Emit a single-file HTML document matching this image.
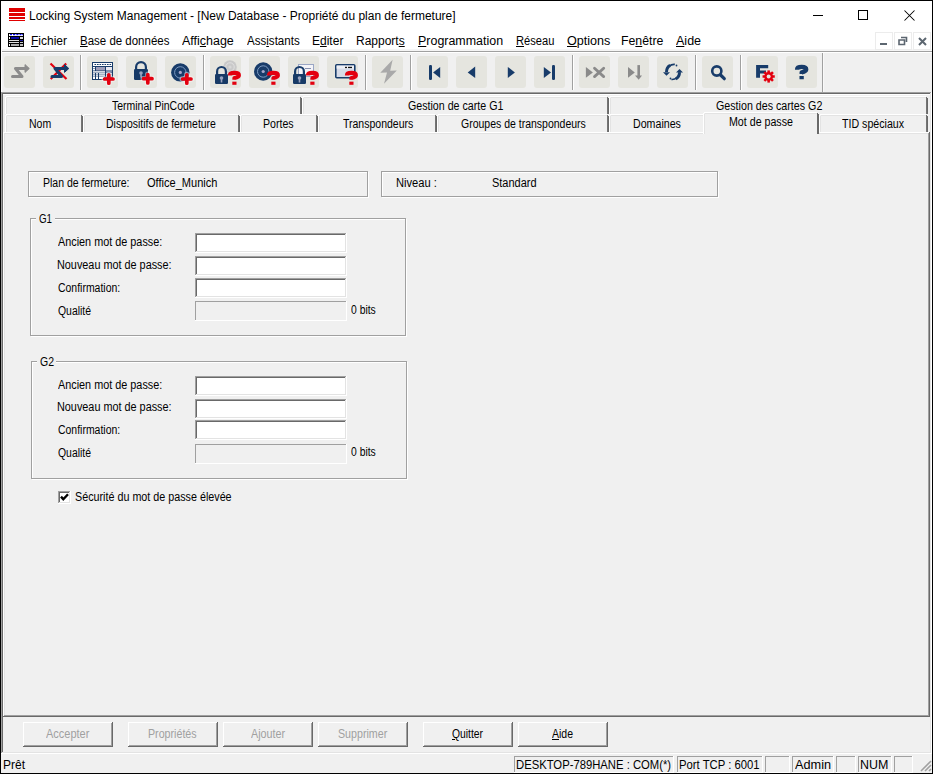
<!DOCTYPE html>
<html><head><meta charset="utf-8"><style>
html,body{margin:0;padding:0;}
body{width:933px;height:774px;position:relative;overflow:hidden;background:#f0f0f0;font-family:"Liberation Sans",sans-serif;}
body>div,body>span,body>svg{position:absolute;box-sizing:content-box;}
.t{white-space:pre;transform-origin:0 0;}
u{text-decoration:underline;text-underline-offset:1px;}
</style></head><body>
<div style="left:1px;top:1px;width:931px;height:50px;background:#ffffff;"></div>
<div style="left:0px;top:0px;width:933px;height:1px;background:#000;"></div>
<div style="left:0px;top:773px;width:933px;height:1px;background:#000;"></div>
<div style="left:0px;top:0px;width:1px;height:774px;background:#000;"></div>
<div style="left:932px;top:0px;width:1px;height:774px;background:#000;"></div>
<div style="left:9px;top:8px;width:16px;height:4px;background:#e00000;"></div>
<div style="left:9px;top:13px;width:16px;height:3px;background:#e00000;"></div>
<div style="left:9px;top:17px;width:16px;height:2px;background:#e00000;"></div>
<div style="left:9px;top:20px;width:16px;height:1px;background:#e00000;"></div>
<div style="left:813px;top:15px;width:10px;height:1px;background:#000;"></div>
<div style="left:858px;top:10px;width:8px;height:8px;border:1px solid #000"></div>
<svg style="left:904px;top:10px" width="11" height="11" viewBox="0 0 11 11"><path d="M0.5 0.5L10.5 10.5M10.5 0.5L0.5 10.5" stroke="#000" stroke-width="1.05"/></svg>
<div style="left:2px;top:49px;width:930px;height:2px;background:#f5f5f5;"></div>
<div style="left:2px;top:51px;width:930px;height:1px;background:#a0a0a0;"></div>
<div style="left:1px;top:52px;width:931px;height:1px;background:#ffffff;"></div>
<div style="left:1px;top:49px;width:1px;height:43px;background:#ffffff;"></div>
<svg style="left:8px;top:33px" width="16" height="14" viewBox="0 0 16 14">
<rect x="0" y="0" width="16" height="14" fill="#000"/>
<rect x="1" y="1" width="14" height="2" fill="#fff"/>
<rect x="2" y="1" width="2" height="1.2" fill="#0a0af0"/><rect x="5" y="1" width="2.3" height="1.2" fill="#0a0af0"/><rect x="8.3" y="1" width="2.2" height="1.2" fill="#0a0af0"/><rect x="11.5" y="1" width="2" height="1.2" fill="#0a0af0"/><rect x="14" y="1" width="0.8" height="1.2" fill="#0a0af0"/>
<rect x="3" y="4" width="8" height="2" fill="#0808a8"/><rect x="1" y="4" width="1" height="2" fill="#fff"/><rect x="12" y="4" width="3" height="2" fill="#ddd"/>
<rect x="1" y="7" width="10" height="1" fill="#ddd"/><rect x="12" y="7" width="3" height="1" fill="#2020a0"/>
<rect x="1" y="9" width="10" height="1" fill="#ddd"/><rect x="12" y="9" width="3" height="1" fill="#ccc"/>
<rect x="1" y="11" width="1" height="2" fill="#fff"/><rect x="3" y="11" width="8" height="2" fill="#aaa"/><rect x="12" y="11" width="3" height="2" fill="#bbb"/>
</svg>
<div style="left:875px;top:32px;width:16px;height:16px;border:1px solid #ececec"></div>
<div style="left:894px;top:32px;width:16px;height:16px;border:1px solid #ececec"></div>
<div style="left:913px;top:32px;width:16px;height:16px;border:1px solid #ececec"></div>
<div style="left:880px;top:43px;width:7px;height:2px;background:#5c6670;"></div>
<svg style="left:898px;top:36px" width="10" height="10" viewBox="0 0 10 10"><path d="M3 1.5H8.5V6M1 4H6.5V8.5H1Z" fill="none" stroke="#5c6670" stroke-width="1.6"/></svg>
<svg style="left:917px;top:36px" width="11" height="11" viewBox="0 0 11 11"><path d="M2 2L9 9M9 2L2 9" stroke="#5c6670" stroke-width="2"/></svg>
<div style="left:4px;top:56px;width:31px;height:32px;background:#e5e5df;border-radius:3px"></div>
<div style="left:43px;top:56px;width:31px;height:32px;background:#e5e5df;border-radius:3px"></div>
<div style="left:87px;top:56px;width:31px;height:32px;background:#e5e5df;border-radius:3px"></div>
<div style="left:126px;top:56px;width:31px;height:32px;background:#e5e5df;border-radius:3px"></div>
<div style="left:165px;top:56px;width:31px;height:32px;background:#e5e5df;border-radius:3px"></div>
<div style="left:210px;top:56px;width:31px;height:32px;background:#e5e5df;border-radius:3px"></div>
<div style="left:249px;top:56px;width:31px;height:32px;background:#e5e5df;border-radius:3px"></div>
<div style="left:288px;top:56px;width:31px;height:32px;background:#e5e5df;border-radius:3px"></div>
<div style="left:327px;top:56px;width:31px;height:32px;background:#e5e5df;border-radius:3px"></div>
<div style="left:372px;top:56px;width:31px;height:32px;background:#e5e5df;border-radius:3px"></div>
<div style="left:417px;top:56px;width:31px;height:32px;background:#e5e5df;border-radius:3px"></div>
<div style="left:456px;top:56px;width:31px;height:32px;background:#e5e5df;border-radius:3px"></div>
<div style="left:495px;top:56px;width:31px;height:32px;background:#e5e5df;border-radius:3px"></div>
<div style="left:534px;top:56px;width:31px;height:32px;background:#e5e5df;border-radius:3px"></div>
<div style="left:579px;top:56px;width:31px;height:32px;background:#e5e5df;border-radius:3px"></div>
<div style="left:618px;top:56px;width:31px;height:32px;background:#e5e5df;border-radius:3px"></div>
<div style="left:657px;top:56px;width:31px;height:32px;background:#e5e5df;border-radius:3px"></div>
<div style="left:702px;top:56px;width:31px;height:32px;background:#e5e5df;border-radius:3px"></div>
<div style="left:747px;top:56px;width:31px;height:32px;background:#e5e5df;border-radius:3px"></div>
<div style="left:786px;top:56px;width:31px;height:32px;background:#e5e5df;border-radius:3px"></div>
<div style="left:80px;top:55px;width:1px;height:35px;background:#a0a0a0;"></div>
<div style="left:81px;top:55px;width:1px;height:35px;background:#ffffff;"></div>
<div style="left:203px;top:55px;width:1px;height:35px;background:#a0a0a0;"></div>
<div style="left:204px;top:55px;width:1px;height:35px;background:#ffffff;"></div>
<div style="left:365px;top:55px;width:1px;height:35px;background:#a0a0a0;"></div>
<div style="left:366px;top:55px;width:1px;height:35px;background:#ffffff;"></div>
<div style="left:410px;top:55px;width:1px;height:35px;background:#a0a0a0;"></div>
<div style="left:411px;top:55px;width:1px;height:35px;background:#ffffff;"></div>
<div style="left:572px;top:55px;width:1px;height:35px;background:#a0a0a0;"></div>
<div style="left:573px;top:55px;width:1px;height:35px;background:#ffffff;"></div>
<div style="left:695px;top:55px;width:1px;height:35px;background:#a0a0a0;"></div>
<div style="left:696px;top:55px;width:1px;height:35px;background:#ffffff;"></div>
<div style="left:740px;top:55px;width:1px;height:35px;background:#a0a0a0;"></div>
<div style="left:741px;top:55px;width:1px;height:35px;background:#ffffff;"></div>
<div style="left:822px;top:53px;width:1px;height:39px;background:#a0a0a0;"></div>
<div style="left:823px;top:53px;width:1px;height:39px;background:#f9f9f9;"></div>
<svg style="left:4px;top:56px" width="32" height="32" viewBox="0 0 32 32"><path d="M8.5 20.5H18L11.5 12.5H21.5" fill="none" stroke="#8c8c8c" stroke-width="3" stroke-linecap="round" stroke-linejoin="round"/><path d="M21 8.6L25.3 12.5L21 16.4Z" fill="#8c8c8c" stroke="#8c8c8c" stroke-width="1" stroke-linejoin="round"/></svg><svg style="left:43px;top:56px" width="32" height="32" viewBox="0 0 32 32"><path d="M7.5 7.5L23.5 23M23.2 7.5L7.7 23" stroke="#e3000f" stroke-width="2.2"/><path d="M9.0 20.5H18.5L12.0 12.5H22.0" fill="none" stroke="#183c6a" stroke-width="3" stroke-linecap="round" stroke-linejoin="round"/><path d="M21.5 8.6L25.8 12.5L21.5 16.4Z" fill="#183c6a" stroke="#183c6a" stroke-width="1" stroke-linejoin="round"/></svg><svg style="left:87px;top:56px" width="32" height="32" viewBox="0 0 32 32"><rect x="5" y="6" width="21" height="18" fill="#183c6a"/><rect x="6" y="7" width="19" height="3" fill="#fff"/><rect x="7.5" y="8" width="1.6" height="1" fill="#183c6a"/><rect x="10" y="8" width="1.6" height="1" fill="#183c6a"/><rect x="12.5" y="8" width="1.6" height="1" fill="#183c6a"/><rect x="15" y="8" width="1.6" height="1" fill="#183c6a"/><rect x="17.5" y="8" width="1.6" height="1" fill="#183c6a"/><rect x="20" y="8" width="1.6" height="1" fill="#183c6a"/><rect x="22.5" y="8" width="1.6" height="1" fill="#183c6a"/><rect x="6" y="11" width="2" height="1.5" fill="#fff"/><rect x="6" y="13" width="2" height="1.5" fill="#fff"/><rect x="9" y="11" width="9" height="3.5" fill="#9d9db8"/><rect x="19" y="11" width="6" height="3.5" fill="#e8e8f0"/><rect x="6" y="15.2" width="12" height="1.4" fill="#fff"/><rect x="19" y="15.2" width="6" height="1.4" fill="#9d9db8"/><rect x="6" y="17.2" width="2" height="1.4" fill="#fff"/><rect x="9" y="17.2" width="2" height="1.4" fill="#fff"/><rect x="12" y="17.2" width="6" height="1.4" fill="#fff"/><rect x="19" y="17.2" width="6" height="1.4" fill="#fff"/><rect x="6" y="19.2" width="2" height="1.4" fill="#fff"/><rect x="9" y="19.2" width="2" height="1.4" fill="#fff"/><rect x="12" y="19.2" width="6" height="1.4" fill="#fff"/><rect x="19" y="19.2" width="6" height="1.4" fill="#fff"/><rect x="6" y="21" width="2" height="2" fill="#fff"/><rect x="9" y="21" width="2" height="2" fill="#fff"/><rect x="12" y="21" width="5" height="2" fill="#fff"/><path d="M21.8 18.4V27.6M17.200000000000003 23H26.4" stroke="#fff" stroke-width="5.4" stroke-linecap="round" opacity="0.45"/><path d="M21.8 18.8V27.2M17.6 23H26.0" stroke="#e3000f" stroke-width="3.7" stroke-linecap="round"/></svg><svg style="left:126px;top:56px" width="32" height="32" viewBox="0 0 32 32"><path d="M10.1 13.5V11.100000000000001A4.9 4.9 0 0 1 19.9 11.100000000000001V13.5" fill="none" stroke="#183c6a" stroke-width="2.2"/><rect x="8" y="13" width="14" height="11" rx="1.2" fill="#173a66"/><circle cx="15.0" cy="17" r="1.8" fill="#9aa4bf"/><rect x="14.2" y="17" width="1.6" height="4.5" fill="#9aa4bf"/><path d="M21.8 18.1V27.299999999999997M17.200000000000003 22.7H26.4" stroke="#fff" stroke-width="5.4" stroke-linecap="round" opacity="0.45"/><path d="M21.8 18.5V26.9M17.6 22.7H26.0" stroke="#e3000f" stroke-width="3.7" stroke-linecap="round"/></svg><svg style="left:165px;top:56px" width="32" height="32" viewBox="0 0 32 32"><circle cx="15.3" cy="16.4" r="9.2" fill="#183c6a"/><circle cx="15.3" cy="16.4" r="5.704" fill="none" stroke="#7d9bc2" stroke-width="1"/><circle cx="15.3" cy="16.4" r="1.6" fill="#a8a8cc"/><path d="M21.8 18.4V27.6M17.200000000000003 23H26.4" stroke="#fff" stroke-width="5.4" stroke-linecap="round" opacity="0.45"/><path d="M21.8 18.8V27.2M17.6 23H26.0" stroke="#e3000f" stroke-width="3.7" stroke-linecap="round"/></svg><svg style="left:210px;top:56px" width="32" height="32" viewBox="0 0 32 32"><circle cx="20" cy="11" r="6.8" fill="#c9c9c9"/><circle cx="20" cy="11" r="4.216" fill="none" stroke="#e0e0e0" stroke-width="1"/><circle cx="20" cy="11" r="1.6" fill="#d8d8d8"/><path d="M7.1 18.5V15.4A4.4 4.4 0 0 1 15.9 15.4V18.5" fill="none" stroke="#183c6a" stroke-width="2.2"/><rect x="5" y="18" width="13" height="10" rx="1.2" fill="#173a66"/><circle cx="11.5" cy="22" r="1.8" fill="#9aa4bf"/><rect x="10.7" y="22" width="1.6" height="4.5" fill="#9aa4bf"/><g transform="translate(-0.9 -0.6) scale(1.05)"><path d="M19.9 19.2V18.6Q19.9 16.6 24.2 16.6Q28.4 16.6 28.4 18.9Q28.4 20.7 24.1 21.6V23.2" fill="none" stroke="#e3000f" stroke-width="3.9" stroke-linejoin="round"/><rect x="22.1" y="25" width="4" height="3" fill="#e3000f"/></g></svg><svg style="left:249px;top:56px" width="32" height="32" viewBox="0 0 32 32"><circle cx="14.2" cy="15.5" r="9.2" fill="#183c6a"/><circle cx="14.2" cy="15.5" r="5.704" fill="none" stroke="#7d9bc2" stroke-width="1"/><circle cx="14.2" cy="15.5" r="1.6" fill="#a8a8cc"/><g transform="translate(-0.9 -0.6) scale(1.05)"><path d="M19.9 19.2V18.6Q19.9 16.6 24.2 16.6Q28.4 16.6 28.4 18.9Q28.4 20.7 24.1 21.6V23.2" fill="none" stroke="#e3000f" stroke-width="3.9" stroke-linejoin="round"/><rect x="22.1" y="25" width="4" height="3" fill="#e3000f"/></g></svg><svg style="left:288px;top:56px" width="32" height="32" viewBox="0 0 32 32"><rect x="10.5" y="8.5" width="15" height="12" fill="#f4f4f8" stroke="#9aa6c4" stroke-width="1"/><rect x="17" y="12" width="6" height="1" fill="#8890b0"/><path d="M7.1 18.5V15.4A4.4 4.4 0 0 1 15.9 15.4V18.5" fill="none" stroke="#183c6a" stroke-width="2.2"/><rect x="5" y="18" width="13" height="10" rx="1.2" fill="#173a66"/><circle cx="11.5" cy="22" r="1.8" fill="#9aa4bf"/><rect x="10.7" y="22" width="1.6" height="4.5" fill="#9aa4bf"/><g transform="translate(-0.9 -0.6) scale(1.05)"><path d="M19.9 19.2V18.6Q19.9 16.6 24.2 16.6Q28.4 16.6 28.4 18.9Q28.4 20.7 24.1 21.6V23.2" fill="none" stroke="#e3000f" stroke-width="3.9" stroke-linejoin="round"/><rect x="22.1" y="25" width="4" height="3" fill="#e3000f"/></g></svg><svg style="left:327px;top:56px" width="32" height="32" viewBox="0 0 32 32"><rect x="8.8" y="8.8" width="19" height="13" rx="1" fill="#d6dbe8" stroke="#183c6a" stroke-width="1.6"/><rect x="9.6" y="9.6" width="17.4" height="3" fill="#eef0f6"/><rect x="18" y="10.8" width="2" height="1.3" fill="#111"/><rect x="21" y="10.8" width="4" height="1.3" fill="#111"/><g transform="translate(-0.9 -0.6) scale(1.05)"><path d="M19.9 19.2V18.6Q19.9 16.6 24.2 16.6Q28.4 16.6 28.4 18.9Q28.4 20.7 24.1 21.6V23.2" fill="none" stroke="#e3000f" stroke-width="3.9" stroke-linejoin="round"/><rect x="22.1" y="25" width="4" height="3" fill="#e3000f"/></g></svg><svg style="left:372px;top:56px" width="32" height="32" viewBox="0 0 32 32"><path d="M20.6 3.8L8.3 16.8L15 16.6L12 27.8L24.8 14.6L18.2 14.8Z" fill="#a9a9a9"/></svg><svg style="left:417px;top:56px" width="32" height="32" viewBox="0 0 32 32"><rect x="12" y="9" width="3" height="15" rx="1.2" fill="#183c6a"/><path d="M16.1 16.4L23.2 10.9V22Z" fill="#183c6a"/></svg><svg style="left:456px;top:56px" width="32" height="32" viewBox="0 0 32 32"><path d="M11.7 16.4L19.2 10.6V22.1Z" fill="#183c6a"/></svg><svg style="left:495px;top:56px" width="32" height="32" viewBox="0 0 32 32"><path d="M19.9 16.4L12.8 10.9V22Z" fill="#183c6a"/></svg><svg style="left:534px;top:56px" width="32" height="32" viewBox="0 0 32 32"><path d="M17 16.4L9.8 10.9V22Z" fill="#183c6a"/><rect x="18" y="9" width="3" height="15" rx="1.2" fill="#183c6a"/></svg><svg style="left:579px;top:56px" width="32" height="32" viewBox="0 0 32 32"><path d="M13.9 16.4L6.9 10.9V21.8Z" fill="#8a8a8a"/><path d="M15.5 12.2L24.7 20.6M24.7 12.2L15.5 20.6" stroke="#8a8a8a" stroke-width="2.8" stroke-linecap="round"/></svg><svg style="left:618px;top:56px" width="32" height="32" viewBox="0 0 32 32"><path d="M16.8 16.4L10 11.1V21.8Z" fill="#8a8a8a"/><rect x="19.4" y="9.1" width="2.6" height="11" fill="#8a8a8a"/><path d="M17 19.4H24L20.7 23.8Z" fill="#8a8a8a"/></svg><svg style="left:657px;top:56px" width="32" height="32" viewBox="0 0 32 32"><path d="M17.8 8.4C13.5 8.1 9.9 10.8 9.5 15.6" fill="none" stroke="#183c6a" stroke-width="1.6"/><path d="M13.2 9.3C11 10.4 9.5 12.6 9.5 16" fill="none" stroke="#183c6a" stroke-width="3"/><path d="M6 16.2H13L9.5 19.8Z" fill="#183c6a"/><path d="M14.4 23.5C18.5 23.8 22.1 21.3 22.5 16.5" fill="none" stroke="#183c6a" stroke-width="1.6"/><path d="M18.8 22.8C21 21.7 22.5 19.6 22.5 16.2" fill="none" stroke="#183c6a" stroke-width="3"/><path d="M19 16.6H26L22.5 12.9Z" fill="#183c6a"/><circle cx="19.5" cy="9.5" r="0.9" fill="#183c6a"/><circle cx="13.5" cy="22.5" r="0.9" fill="#183c6a"/></svg><svg style="left:702px;top:56px" width="32" height="32" viewBox="0 0 32 32"><circle cx="14.8" cy="15" r="4.6" fill="none" stroke="#183c6a" stroke-width="2.6"/><path d="M18.6 19L22.3 22.7" stroke="#183c6a" stroke-width="3.2" stroke-linecap="round"/></svg><svg style="left:747px;top:56px" width="32" height="32" viewBox="0 0 32 32"><path d="M9.1 9.1H21.2V12.2H13V14.4H19V17.5H13V21.8H9.1Z" fill="#183c6a"/><rect x="20.4" y="14.4" width="2.5" height="12.2" fill="#e3000f" transform="rotate(0 21.65 20.5)"/><rect x="20.4" y="14.4" width="2.5" height="12.2" fill="#e3000f" transform="rotate(45 21.65 20.5)"/><rect x="20.4" y="14.4" width="2.5" height="12.2" fill="#e3000f" transform="rotate(90 21.65 20.5)"/><rect x="20.4" y="14.4" width="2.5" height="12.2" fill="#e3000f" transform="rotate(135 21.65 20.5)"/><circle cx="21.65" cy="20.5" r="4.4" fill="#e3000f"/><circle cx="21.65" cy="20.5" r="2" fill="#e5e5df"/></svg><svg style="left:786px;top:56px" width="32" height="32" viewBox="0 0 32 32"><g transform="translate(-10.4 -7) scale(1.08)"><path d="M19.9 19.2V18.6Q19.9 16.6 24.2 16.6Q28.4 16.6 28.4 18.9Q28.4 20.7 24.1 21.6V23.2" fill="none" stroke="#183c6a" stroke-width="3.9" stroke-linejoin="round"/><rect x="22.1" y="25" width="4" height="3" fill="#183c6a"/></g></svg>
<div style="left:1px;top:92px;width:931px;height:1px;background:#a0a0a0;"></div>
<div style="left:2px;top:93px;width:930px;height:1px;background:#696969;"></div>
<div style="left:1px;top:92px;width:1px;height:661px;background:#a0a0a0;"></div>
<div style="left:2px;top:93px;width:1px;height:659px;background:#696969;"></div>
<div style="left:2px;top:752px;width:930px;height:1px;background:#e3e3e3;"></div>
<div style="left:1px;top:753px;width:931px;height:1px;background:#ffffff;"></div>
<div style="left:930px;top:93px;width:1px;height:660px;background:#e3e3e3;"></div>
<div style="left:931px;top:92px;width:1px;height:662px;background:#ffffff;"></div>
<div style="left:3px;top:94px;width:927px;height:1px;background:#ffffff;"></div>
<div style="left:5px;top:97px;width:1px;height:17px;background:#ffffff;"></div>
<div style="left:6px;top:98px;width:1px;height:16px;background:#e3e3e3;"></div>
<div style="left:6px;top:96px;width:294px;height:1px;background:#ffffff;"></div>
<div style="left:7px;top:97px;width:293px;height:1px;background:#e3e3e3;"></div>
<div style="left:300px;top:97px;width:1px;height:17px;background:#747474;"></div>
<div style="left:301px;top:98px;width:1px;height:16px;background:#696969;"></div>
<div style="left:302px;top:97px;width:1px;height:17px;background:#ffffff;"></div>
<div style="left:303px;top:98px;width:1px;height:16px;background:#e3e3e3;"></div>
<div style="left:303px;top:96px;width:304px;height:1px;background:#ffffff;"></div>
<div style="left:304px;top:97px;width:303px;height:1px;background:#e3e3e3;"></div>
<div style="left:607px;top:97px;width:1px;height:17px;background:#747474;"></div>
<div style="left:608px;top:98px;width:1px;height:16px;background:#696969;"></div>
<div style="left:609px;top:97px;width:1px;height:17px;background:#ffffff;"></div>
<div style="left:610px;top:98px;width:1px;height:16px;background:#e3e3e3;"></div>
<div style="left:610px;top:96px;width:316px;height:1px;background:#ffffff;"></div>
<div style="left:611px;top:97px;width:315px;height:1px;background:#e3e3e3;"></div>
<div style="left:926px;top:97px;width:1px;height:17px;background:#747474;"></div>
<div style="left:927px;top:98px;width:1px;height:16px;background:#696969;"></div>
<div style="left:5px;top:115px;width:1px;height:17px;background:#ffffff;"></div>
<div style="left:6px;top:116px;width:1px;height:16px;background:#e3e3e3;"></div>
<div style="left:6px;top:114px;width:75px;height:1px;background:#ffffff;"></div>
<div style="left:7px;top:115px;width:74px;height:1px;background:#e3e3e3;"></div>
<div style="left:81px;top:115px;width:1px;height:17px;background:#747474;"></div>
<div style="left:82px;top:116px;width:1px;height:16px;background:#696969;"></div>
<div style="left:83px;top:115px;width:1px;height:17px;background:#ffffff;"></div>
<div style="left:84px;top:116px;width:1px;height:16px;background:#e3e3e3;"></div>
<div style="left:84px;top:114px;width:154px;height:1px;background:#ffffff;"></div>
<div style="left:85px;top:115px;width:153px;height:1px;background:#e3e3e3;"></div>
<div style="left:238px;top:115px;width:1px;height:17px;background:#747474;"></div>
<div style="left:239px;top:116px;width:1px;height:16px;background:#696969;"></div>
<div style="left:240px;top:115px;width:1px;height:17px;background:#ffffff;"></div>
<div style="left:241px;top:116px;width:1px;height:16px;background:#e3e3e3;"></div>
<div style="left:241px;top:114px;width:75px;height:1px;background:#ffffff;"></div>
<div style="left:242px;top:115px;width:74px;height:1px;background:#e3e3e3;"></div>
<div style="left:316px;top:115px;width:1px;height:17px;background:#747474;"></div>
<div style="left:317px;top:116px;width:1px;height:16px;background:#696969;"></div>
<div style="left:318px;top:115px;width:1px;height:17px;background:#ffffff;"></div>
<div style="left:319px;top:116px;width:1px;height:16px;background:#e3e3e3;"></div>
<div style="left:319px;top:114px;width:116px;height:1px;background:#ffffff;"></div>
<div style="left:320px;top:115px;width:115px;height:1px;background:#e3e3e3;"></div>
<div style="left:435px;top:115px;width:1px;height:17px;background:#747474;"></div>
<div style="left:436px;top:116px;width:1px;height:16px;background:#696969;"></div>
<div style="left:437px;top:115px;width:1px;height:17px;background:#ffffff;"></div>
<div style="left:438px;top:116px;width:1px;height:16px;background:#e3e3e3;"></div>
<div style="left:438px;top:114px;width:169px;height:1px;background:#ffffff;"></div>
<div style="left:439px;top:115px;width:168px;height:1px;background:#e3e3e3;"></div>
<div style="left:607px;top:115px;width:1px;height:17px;background:#747474;"></div>
<div style="left:608px;top:116px;width:1px;height:16px;background:#696969;"></div>
<div style="left:609px;top:115px;width:1px;height:17px;background:#ffffff;"></div>
<div style="left:610px;top:116px;width:1px;height:16px;background:#e3e3e3;"></div>
<div style="left:610px;top:114px;width:94px;height:1px;background:#ffffff;"></div>
<div style="left:611px;top:115px;width:93px;height:1px;background:#e3e3e3;"></div>
<div style="left:704px;top:115px;width:1px;height:17px;background:#747474;"></div>
<div style="left:705px;top:116px;width:1px;height:16px;background:#696969;"></div>
<div style="left:819px;top:115px;width:1px;height:17px;background:#ffffff;"></div>
<div style="left:820px;top:116px;width:1px;height:16px;background:#e3e3e3;"></div>
<div style="left:820px;top:114px;width:106px;height:1px;background:#ffffff;"></div>
<div style="left:821px;top:115px;width:105px;height:1px;background:#e3e3e3;"></div>
<div style="left:926px;top:115px;width:1px;height:17px;background:#747474;"></div>
<div style="left:927px;top:116px;width:1px;height:16px;background:#696969;"></div>
<div style="left:3px;top:132px;width:700px;height:1px;background:#ffffff;"></div>
<div style="left:4px;top:133px;width:699px;height:1px;background:#e3e3e3;"></div>
<div style="left:819px;top:132px;width:111px;height:1px;background:#ffffff;"></div>
<div style="left:819px;top:133px;width:110px;height:1px;background:#e3e3e3;"></div>
<div style="left:3px;top:132px;width:1px;height:585px;background:#ffffff;"></div>
<div style="left:4px;top:133px;width:1px;height:583px;background:#e3e3e3;"></div>
<div style="left:929px;top:132px;width:1px;height:585px;background:#696969;"></div>
<div style="left:928px;top:133px;width:1px;height:583px;background:#a0a0a0;"></div>
<div style="left:3px;top:716px;width:927px;height:1px;background:#696969;"></div>
<div style="left:4px;top:715px;width:925px;height:1px;background:#a0a0a0;"></div>
<div style="left:704px;top:113px;width:114px;height:21px;background:#f0f0f0;"></div>
<div style="left:703px;top:113px;width:1px;height:21px;background:#ffffff;"></div>
<div style="left:704px;top:114px;width:1px;height:20px;background:#e3e3e3;"></div>
<div style="left:704px;top:112px;width:113px;height:1px;background:#ffffff;"></div>
<div style="left:705px;top:113px;width:112px;height:1px;background:#e3e3e3;"></div>
<div style="left:817px;top:113px;width:1px;height:21px;background:#696969;"></div>
<div style="left:818px;top:114px;width:1px;height:20px;background:#696969;"></div>
<div style="left:29px;top:172px;width:338px;height:24px;border:1px solid #fff"></div>
<div style="left:28px;top:171px;width:338px;height:24px;border:1px solid #a0a0a0"></div>
<div style="left:382px;top:172px;width:335px;height:24px;border:1px solid #fff"></div>
<div style="left:381px;top:171px;width:335px;height:24px;border:1px solid #a0a0a0"></div>
<div style="left:31px;top:219px;width:374px;height:116px;border:1px solid #fff"></div>
<div style="left:30px;top:218px;width:374px;height:116px;border:1px solid #a0a0a0"></div>
<div style="left:36px;top:218px;width:19px;height:2px;background:#f0f0f0;"></div>
<div style="left:195px;top:233px;width:152px;height:20px;background:#fff;"></div>
<div style="left:195px;top:233px;width:151px;height:1px;background:#a0a0a0;"></div>
<div style="left:195px;top:233px;width:1px;height:19px;background:#a0a0a0;"></div>
<div style="left:196px;top:234px;width:149px;height:1px;background:#696969;"></div>
<div style="left:196px;top:234px;width:1px;height:17px;background:#696969;"></div>
<div style="left:196px;top:251px;width:150px;height:1px;background:#e3e3e3;"></div>
<div style="left:345px;top:234px;width:1px;height:18px;background:#e3e3e3;"></div>
<div style="left:195px;top:252px;width:152px;height:1px;background:#ffffff;"></div>
<div style="left:346px;top:233px;width:1px;height:20px;background:#ffffff;"></div>
<div style="left:195px;top:256px;width:152px;height:20px;background:#fff;"></div>
<div style="left:195px;top:256px;width:151px;height:1px;background:#a0a0a0;"></div>
<div style="left:195px;top:256px;width:1px;height:19px;background:#a0a0a0;"></div>
<div style="left:196px;top:257px;width:149px;height:1px;background:#696969;"></div>
<div style="left:196px;top:257px;width:1px;height:17px;background:#696969;"></div>
<div style="left:196px;top:274px;width:150px;height:1px;background:#e3e3e3;"></div>
<div style="left:345px;top:257px;width:1px;height:18px;background:#e3e3e3;"></div>
<div style="left:195px;top:275px;width:152px;height:1px;background:#ffffff;"></div>
<div style="left:346px;top:256px;width:1px;height:20px;background:#ffffff;"></div>
<div style="left:195px;top:278px;width:152px;height:20px;background:#fff;"></div>
<div style="left:195px;top:278px;width:151px;height:1px;background:#a0a0a0;"></div>
<div style="left:195px;top:278px;width:1px;height:19px;background:#a0a0a0;"></div>
<div style="left:196px;top:279px;width:149px;height:1px;background:#696969;"></div>
<div style="left:196px;top:279px;width:1px;height:17px;background:#696969;"></div>
<div style="left:196px;top:296px;width:150px;height:1px;background:#e3e3e3;"></div>
<div style="left:345px;top:279px;width:1px;height:18px;background:#e3e3e3;"></div>
<div style="left:195px;top:297px;width:152px;height:1px;background:#ffffff;"></div>
<div style="left:346px;top:278px;width:1px;height:20px;background:#ffffff;"></div>
<div style="left:195px;top:301px;width:151px;height:1px;background:#a0a0a0;"></div>
<div style="left:195px;top:301px;width:1px;height:20px;background:#a0a0a0;"></div>
<div style="left:195px;top:320px;width:152px;height:1px;background:#ffffff;"></div>
<div style="left:346px;top:301px;width:1px;height:20px;background:#ffffff;"></div>
<div style="left:32px;top:362px;width:374px;height:116px;border:1px solid #fff"></div>
<div style="left:31px;top:361px;width:374px;height:116px;border:1px solid #a0a0a0"></div>
<div style="left:37px;top:361px;width:19px;height:2px;background:#f0f0f0;"></div>
<div style="left:195px;top:376px;width:152px;height:20px;background:#fff;"></div>
<div style="left:195px;top:376px;width:151px;height:1px;background:#a0a0a0;"></div>
<div style="left:195px;top:376px;width:1px;height:19px;background:#a0a0a0;"></div>
<div style="left:196px;top:377px;width:149px;height:1px;background:#696969;"></div>
<div style="left:196px;top:377px;width:1px;height:17px;background:#696969;"></div>
<div style="left:196px;top:394px;width:150px;height:1px;background:#e3e3e3;"></div>
<div style="left:345px;top:377px;width:1px;height:18px;background:#e3e3e3;"></div>
<div style="left:195px;top:395px;width:152px;height:1px;background:#ffffff;"></div>
<div style="left:346px;top:376px;width:1px;height:20px;background:#ffffff;"></div>
<div style="left:195px;top:399px;width:152px;height:20px;background:#fff;"></div>
<div style="left:195px;top:399px;width:151px;height:1px;background:#a0a0a0;"></div>
<div style="left:195px;top:399px;width:1px;height:19px;background:#a0a0a0;"></div>
<div style="left:196px;top:400px;width:149px;height:1px;background:#696969;"></div>
<div style="left:196px;top:400px;width:1px;height:17px;background:#696969;"></div>
<div style="left:196px;top:417px;width:150px;height:1px;background:#e3e3e3;"></div>
<div style="left:345px;top:400px;width:1px;height:18px;background:#e3e3e3;"></div>
<div style="left:195px;top:418px;width:152px;height:1px;background:#ffffff;"></div>
<div style="left:346px;top:399px;width:1px;height:20px;background:#ffffff;"></div>
<div style="left:195px;top:420px;width:152px;height:20px;background:#fff;"></div>
<div style="left:195px;top:420px;width:151px;height:1px;background:#a0a0a0;"></div>
<div style="left:195px;top:420px;width:1px;height:19px;background:#a0a0a0;"></div>
<div style="left:196px;top:421px;width:149px;height:1px;background:#696969;"></div>
<div style="left:196px;top:421px;width:1px;height:17px;background:#696969;"></div>
<div style="left:196px;top:438px;width:150px;height:1px;background:#e3e3e3;"></div>
<div style="left:345px;top:421px;width:1px;height:18px;background:#e3e3e3;"></div>
<div style="left:195px;top:439px;width:152px;height:1px;background:#ffffff;"></div>
<div style="left:346px;top:420px;width:1px;height:20px;background:#ffffff;"></div>
<div style="left:195px;top:444px;width:151px;height:1px;background:#a0a0a0;"></div>
<div style="left:195px;top:444px;width:1px;height:20px;background:#a0a0a0;"></div>
<div style="left:195px;top:463px;width:152px;height:1px;background:#ffffff;"></div>
<div style="left:346px;top:444px;width:1px;height:20px;background:#ffffff;"></div>
<div style="left:58px;top:491px;width:13px;height:13px;background:#ffffff;"></div>
<div style="left:58px;top:491px;width:12px;height:1px;background:#a0a0a0;"></div>
<div style="left:58px;top:491px;width:1px;height:12px;background:#a0a0a0;"></div>
<div style="left:59px;top:492px;width:10px;height:1px;background:#696969;"></div>
<div style="left:59px;top:492px;width:1px;height:10px;background:#696969;"></div>
<div style="left:59px;top:502px;width:11px;height:1px;background:#e3e3e3;"></div>
<div style="left:69px;top:492px;width:1px;height:11px;background:#e3e3e3;"></div>
<svg style="left:60px;top:493px" width="9" height="9" viewBox="0 0 9 9"><path d="M1 3.6L3.3 6.2L8 1.2" fill="none" stroke="#000" stroke-width="2.4"/></svg>
<div style="left:23px;top:722px;width:90px;height:25px;background:#f0f0f0;"></div>
<div style="left:23px;top:722px;width:90px;height:1px;background:#ffffff;"></div>
<div style="left:23px;top:722px;width:1px;height:25px;background:#ffffff;"></div>
<div style="left:24px;top:745px;width:88px;height:1px;background:#a0a0a0;"></div>
<div style="left:111px;top:723px;width:1px;height:23px;background:#a0a0a0;"></div>
<div style="left:23px;top:746px;width:90px;height:1px;background:#696969;"></div>
<div style="left:112px;top:722px;width:1px;height:25px;background:#696969;"></div>
<div style="left:128px;top:722px;width:90px;height:25px;background:#f0f0f0;"></div>
<div style="left:128px;top:722px;width:90px;height:1px;background:#ffffff;"></div>
<div style="left:128px;top:722px;width:1px;height:25px;background:#ffffff;"></div>
<div style="left:129px;top:745px;width:88px;height:1px;background:#a0a0a0;"></div>
<div style="left:216px;top:723px;width:1px;height:23px;background:#a0a0a0;"></div>
<div style="left:128px;top:746px;width:90px;height:1px;background:#696969;"></div>
<div style="left:217px;top:722px;width:1px;height:25px;background:#696969;"></div>
<div style="left:223px;top:722px;width:90px;height:25px;background:#f0f0f0;"></div>
<div style="left:223px;top:722px;width:90px;height:1px;background:#ffffff;"></div>
<div style="left:223px;top:722px;width:1px;height:25px;background:#ffffff;"></div>
<div style="left:224px;top:745px;width:88px;height:1px;background:#a0a0a0;"></div>
<div style="left:311px;top:723px;width:1px;height:23px;background:#a0a0a0;"></div>
<div style="left:223px;top:746px;width:90px;height:1px;background:#696969;"></div>
<div style="left:312px;top:722px;width:1px;height:25px;background:#696969;"></div>
<div style="left:318px;top:722px;width:90px;height:25px;background:#f0f0f0;"></div>
<div style="left:318px;top:722px;width:90px;height:1px;background:#ffffff;"></div>
<div style="left:318px;top:722px;width:1px;height:25px;background:#ffffff;"></div>
<div style="left:319px;top:745px;width:88px;height:1px;background:#a0a0a0;"></div>
<div style="left:406px;top:723px;width:1px;height:23px;background:#a0a0a0;"></div>
<div style="left:318px;top:746px;width:90px;height:1px;background:#696969;"></div>
<div style="left:407px;top:722px;width:1px;height:25px;background:#696969;"></div>
<div style="left:423px;top:722px;width:90px;height:25px;background:#f0f0f0;"></div>
<div style="left:423px;top:722px;width:90px;height:1px;background:#ffffff;"></div>
<div style="left:423px;top:722px;width:1px;height:25px;background:#ffffff;"></div>
<div style="left:424px;top:745px;width:88px;height:1px;background:#a0a0a0;"></div>
<div style="left:511px;top:723px;width:1px;height:23px;background:#a0a0a0;"></div>
<div style="left:423px;top:746px;width:90px;height:1px;background:#696969;"></div>
<div style="left:512px;top:722px;width:1px;height:25px;background:#696969;"></div>
<div style="left:518px;top:722px;width:90px;height:25px;background:#f0f0f0;"></div>
<div style="left:518px;top:722px;width:90px;height:1px;background:#ffffff;"></div>
<div style="left:518px;top:722px;width:1px;height:25px;background:#ffffff;"></div>
<div style="left:519px;top:745px;width:88px;height:1px;background:#a0a0a0;"></div>
<div style="left:606px;top:723px;width:1px;height:23px;background:#a0a0a0;"></div>
<div style="left:518px;top:746px;width:90px;height:1px;background:#696969;"></div>
<div style="left:607px;top:722px;width:1px;height:25px;background:#696969;"></div>
<div style="left:514px;top:756px;width:160px;height:1px;background:#a0a0a0;"></div>
<div style="left:514px;top:756px;width:1px;height:16px;background:#a0a0a0;"></div>
<div style="left:514px;top:772px;width:160px;height:1px;background:#ffffff;"></div>
<div style="left:673px;top:756px;width:1px;height:17px;background:#ffffff;"></div>
<div style="left:677px;top:756px;width:86px;height:1px;background:#a0a0a0;"></div>
<div style="left:677px;top:756px;width:1px;height:16px;background:#a0a0a0;"></div>
<div style="left:677px;top:772px;width:86px;height:1px;background:#ffffff;"></div>
<div style="left:762px;top:756px;width:1px;height:17px;background:#ffffff;"></div>
<div style="left:765px;top:756px;width:25px;height:1px;background:#a0a0a0;"></div>
<div style="left:765px;top:756px;width:1px;height:16px;background:#a0a0a0;"></div>
<div style="left:765px;top:772px;width:25px;height:1px;background:#ffffff;"></div>
<div style="left:789px;top:756px;width:1px;height:17px;background:#ffffff;"></div>
<div style="left:792px;top:756px;width:42px;height:1px;background:#a0a0a0;"></div>
<div style="left:792px;top:756px;width:1px;height:16px;background:#a0a0a0;"></div>
<div style="left:792px;top:772px;width:42px;height:1px;background:#ffffff;"></div>
<div style="left:833px;top:756px;width:1px;height:17px;background:#ffffff;"></div>
<div style="left:836px;top:756px;width:20px;height:1px;background:#a0a0a0;"></div>
<div style="left:836px;top:756px;width:1px;height:16px;background:#a0a0a0;"></div>
<div style="left:836px;top:772px;width:20px;height:1px;background:#ffffff;"></div>
<div style="left:855px;top:756px;width:1px;height:17px;background:#ffffff;"></div>
<div style="left:858px;top:756px;width:34px;height:1px;background:#a0a0a0;"></div>
<div style="left:858px;top:756px;width:1px;height:16px;background:#a0a0a0;"></div>
<div style="left:858px;top:772px;width:34px;height:1px;background:#ffffff;"></div>
<div style="left:891px;top:756px;width:1px;height:17px;background:#ffffff;"></div>
<div style="left:894px;top:756px;width:19px;height:1px;background:#a0a0a0;"></div>
<div style="left:894px;top:756px;width:1px;height:16px;background:#a0a0a0;"></div>
<div style="left:894px;top:772px;width:19px;height:1px;background:#ffffff;"></div>
<div style="left:912px;top:756px;width:1px;height:17px;background:#ffffff;"></div>
<svg style="left:917px;top:757px" width="15" height="15" viewBox="0 0 15 15"><path d="M4 14L14 4M8 14L14 8M12 14L14 12" stroke="#a0a0a0" stroke-width="1.6"/></svg>
<span class="t" style="left:29.00px;top:10px;font-size:12px;line-height:12px;color:#000;transform:scaleX(0.9977)">Locking System Management - [New Database - Propriété du plan de fermeture]</span>
<span class="t" style="left:31.00px;top:35px;font-size:12px;line-height:12px;color:#000;transform:scaleX(1.0000)"><u>F</u>ichier</span>
<span class="t" style="left:80.00px;top:35px;font-size:12px;line-height:12px;color:#000;transform:scaleX(0.9570)"><u>B</u>ase de données</span>
<span class="t" style="left:182.00px;top:35px;font-size:12px;line-height:12px;color:#000;transform:scaleX(1.0400)">Affi<u>c</u>hage</span>
<span class="t" style="left:247.00px;top:35px;font-size:12px;line-height:12px;color:#000;transform:scaleX(0.9636)">Ass<u>i</u>stants</span>
<span class="t" style="left:312.00px;top:35px;font-size:12px;line-height:12px;color:#000;transform:scaleX(1.0000)">E<u>d</u>iter</span>
<span class="t" style="left:356.00px;top:35px;font-size:12px;line-height:12px;color:#000;transform:scaleX(1.0000)">Rapport<u>s</u></span>
<span class="t" style="left:418.00px;top:35px;font-size:12px;line-height:12px;color:#000;transform:scaleX(1.0370)"><u>P</u>rogrammation</span>
<span class="t" style="left:516.00px;top:35px;font-size:12px;line-height:12px;color:#000;transform:scaleX(0.9268)"><u>R</u>éseau</span>
<span class="t" style="left:567.00px;top:35px;font-size:12px;line-height:12px;color:#000;transform:scaleX(1.0488)"><u>O</u>ptions</span>
<span class="t" style="left:620.98px;top:35px;font-size:12px;line-height:12px;color:#000;transform:scaleX(1.0250)">Fe<u>n</u>être</span>
<span class="t" style="left:676.00px;top:35px;font-size:12px;line-height:12px;color:#000;transform:scaleX(1.0417)"><u>A</u>ide</span>
<span class="t" style="left:112.00px;top:100px;font-size:12px;line-height:12px;color:#000;transform:scaleX(0.8723)">Terminal PinCode</span>
<span class="t" style="left:408.00px;top:100px;font-size:12px;line-height:12px;color:#000;transform:scaleX(0.8879)">Gestion de carte G1</span>
<span class="t" style="left:716.00px;top:100px;font-size:12px;line-height:12px;color:#000;transform:scaleX(0.8908)">Gestion des cartes G2</span>
<span class="t" style="left:29.12px;top:118px;font-size:12px;line-height:12px;color:#000;transform:scaleX(0.8750)">Nom</span>
<span class="t" style="left:106.13px;top:118px;font-size:12px;line-height:12px;color:#000;transform:scaleX(0.8720)">Dispositifs de fermeture</span>
<span class="t" style="left:263.12px;top:118px;font-size:12px;line-height:12px;color:#000;transform:scaleX(0.8824)">Portes</span>
<span class="t" style="left:343.00px;top:118px;font-size:12px;line-height:12px;color:#000;transform:scaleX(0.8750)">Transpondeurs</span>
<span class="t" style="left:461.00px;top:118px;font-size:12px;line-height:12px;color:#000;transform:scaleX(0.8741)">Groupes de transpondeurs</span>
<span class="t" style="left:633.11px;top:118px;font-size:12px;line-height:12px;color:#000;transform:scaleX(0.8868)">Domaines</span>
<span class="t" style="left:729.11px;top:116px;font-size:12px;line-height:12px;color:#000;transform:scaleX(0.8873)">Mot de passe</span>
<span class="t" style="left:842.00px;top:118px;font-size:12px;line-height:12px;color:#000;transform:scaleX(0.8857)">TID spéciaux</span>
<span class="t" style="left:43.12px;top:177px;font-size:12px;line-height:12px;color:#000;transform:scaleX(0.8763)">Plan de fermeture:</span>
<span class="t" style="left:147.00px;top:177px;font-size:12px;line-height:12px;color:#000;transform:scaleX(0.9211)">Office_Munich</span>
<span class="t" style="left:396.07px;top:177px;font-size:12px;line-height:12px;color:#000;transform:scaleX(0.9286)">Niveau :</span>
<span class="t" style="left:492.09px;top:177px;font-size:12px;line-height:12px;color:#000;transform:scaleX(0.9149)">Standard</span>
<span class="t" style="left:39.00px;top:213px;font-size:12px;line-height:12px;color:#000;transform:scaleX(0.8125)">G1</span>
<span class="t" style="left:58.00px;top:236px;font-size:12px;line-height:12px;color:#000;transform:scaleX(0.9035)">Ancien mot de passe:</span>
<span class="t" style="left:57.10px;top:259px;font-size:12px;line-height:12px;color:#000;transform:scaleX(0.9040)">Nouveau mot de passe:</span>
<span class="t" style="left:58.00px;top:282px;font-size:12px;line-height:12px;color:#000;transform:scaleX(0.8714)">Confirmation:</span>
<span class="t" style="left:58.00px;top:305px;font-size:12px;line-height:12px;color:#000;transform:scaleX(0.8684)">Qualité</span>
<span class="t" style="left:351.00px;top:304px;font-size:12px;line-height:12px;color:#000;transform:scaleX(0.8621)">0 bits</span>
<span class="t" style="left:40.00px;top:356px;font-size:12px;line-height:12px;color:#000;transform:scaleX(0.8750)">G2</span>
<span class="t" style="left:58.00px;top:379px;font-size:12px;line-height:12px;color:#000;transform:scaleX(0.9035)">Ancien mot de passe:</span>
<span class="t" style="left:57.10px;top:401px;font-size:12px;line-height:12px;color:#000;transform:scaleX(0.9040)">Nouveau mot de passe:</span>
<span class="t" style="left:58.00px;top:424px;font-size:12px;line-height:12px;color:#000;transform:scaleX(0.8714)">Confirmation:</span>
<span class="t" style="left:58.00px;top:447px;font-size:12px;line-height:12px;color:#000;transform:scaleX(0.8684)">Qualité</span>
<span class="t" style="left:351.00px;top:446px;font-size:12px;line-height:12px;color:#000;transform:scaleX(0.8621)">0 bits</span>
<span class="t" style="left:75.10px;top:491px;font-size:12px;line-height:12px;color:#000;transform:scaleX(0.8960)">Sécurité du mot de passe élevée</span>
<span class="t" style="left:46.00px;top:728px;font-size:12px;line-height:12px;color:#a0a0a0;transform:scaleX(0.9149)">Accepter</span>
<span class="t" style="left:148.11px;top:728px;font-size:12px;line-height:12px;color:#a0a0a0;transform:scaleX(0.8889)">Propriétés</span>
<span class="t" style="left:251.00px;top:728px;font-size:12px;line-height:12px;color:#a0a0a0;transform:scaleX(0.8947)">Ajouter</span>
<span class="t" style="left:338.11px;top:728px;font-size:12px;line-height:12px;color:#a0a0a0;transform:scaleX(0.8889)">Supprimer</span>
<span class="t" style="left:452.00px;top:728px;font-size:12px;line-height:12px;color:#000;transform:scaleX(0.8611)"><u>Q</u>uitter</span>
<span class="t" style="left:552.00px;top:728px;font-size:12px;line-height:12px;color:#000;transform:scaleX(0.8750)"><u>A</u>ide</span>
<span class="t" style="left:3.00px;top:759px;font-size:12px;line-height:12px;color:#000;transform:scaleX(1.0000)">Prêt</span>
<span class="t" style="left:516.06px;top:759px;font-size:12px;line-height:12px;color:#000;transform:scaleX(0.9390)">DESKTOP-789HANE : COM(*)</span>
<span class="t" style="left:679.06px;top:759px;font-size:12px;line-height:12px;color:#000;transform:scaleX(0.9405)">Port TCP : 6001</span>
<span class="t" style="left:795.00px;top:759px;font-size:12px;line-height:12px;color:#000;transform:scaleX(1.0606)">Admin</span>
<span class="t" style="left:859.96px;top:759px;font-size:12px;line-height:12px;color:#000;transform:scaleX(1.0385)">NUM</span>
</body></html>
